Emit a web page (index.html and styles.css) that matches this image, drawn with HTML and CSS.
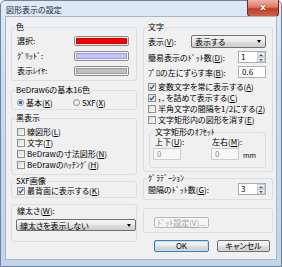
FILE: index.html
```html
<!DOCTYPE html>
<html lang="ja">
<head>
    <meta charset="UTF-8">
    <title>図形表示の設定</title>
    <link rel="stylesheet" href="styles.css">
</head>
<body>
<div class="window">
    <div class="titlebar">
        <span class="title">図形表示の設定</span>
        <span class="close-btn">x</span>
    </div>
    <div class="client">
        <!-- left column -->
        <div class="col">
            <fieldset class="group g-color">
                <legend>色</legend>
                <div class="color-row"><span>選択:</span><span class="swatch"><span class="fill red"></span></span></div>
                <div class="color-row"><span><span class="hw">ｸﾞﾘｯﾄﾞ</span>:</span><span class="swatch"><span class="fill lavender"></span></span></div>
                <div class="color-row"><span>表示<span class="hw">ﾚｲﾔ</span>:</span><span class="swatch"><span class="fill gray"></span></span></div>
            </fieldset>
            <fieldset class="group g-palette">
                <legend>BeDraw6の基本16色</legend>
                <div class="radio-row">
                    <label class="opt opt-wide"><span class="radio on"></span>基本(<u>K</u>)</label>
                    <label class="opt"><span class="radio"></span>SXF(<u>X</u>)</label>
                </div>
            </fieldset>
            <fieldset class="group g-black">
                <legend>黒表示</legend>
                <label class="opt"><span class="check"></span>線図形(<u>L</u>)</label>
                <label class="opt"><span class="check"></span>文字(<u>T</u>)</label>
                <label class="opt"><span class="check"></span>BeDrawの寸法図形(<u>N</u>)</label>
                <label class="opt"><span class="check"></span>BeDrawの<span class="hw">ﾊｯﾁﾝｸﾞ</span>(<u>H</u>)</label>
            </fieldset>
            <fieldset class="group g-sxf">
                <legend>SXF画像</legend>
                <label class="opt"><span class="check on"><svg viewBox="0 0 6 6"><path d="M0.8 3.2 L2.4 4.8 L5.3 0.9"/></svg></span>最背面に表示する(<u>K</u>)</label>
            </fieldset>
            <fieldset class="group g-width">
                <div class="plain-label">線太さ(<u>W</u>):</div>
                <div class="combo combo-wide"><span>線太さを表示しない</span><span class="arrow"></span></div>
            </fieldset>
        </div>

        <!-- right column -->
        <div class="col">
            <fieldset class="group g-text">
                <legend>文字</legend>
                <div class="field-row row-combo">
                    <span>表示(<u>V</u>):</span>
                    <div class="combo"><span>表示する</span><span class="arrow"></span></div>
                </div>
                <div class="field-row">
                    <span>簡易表示の<span class="hw">ﾄﾞｯﾄ</span>数(<u>D</u>):</span>
                    <div class="spin"><span class="val">1</span><span class="arrows"><i></i><i></i></span></div>
                </div>
                <div class="field-row">
                    <span><span class="hw">ﾌﾟﾛ</span>の左にずらす率(<u>B</u>):</span>
                    <div class="textbox">0.6</div>
                </div>
                <div class="checks">
                    <label class="opt"><span class="check on"><svg viewBox="0 0 6 6"><path d="M0.8 3.2 L2.4 4.8 L5.3 0.9"/></svg></span>変数文字を常に表示する(<u>A</u>)</label>
                    <label class="opt"><span class="check on"><svg viewBox="0 0 6 6"><path d="M0.8 3.2 L2.4 4.8 L5.3 0.9"/></svg></span>，．を詰めて表示する(<u>C</u>)</label>
                    <label class="opt"><span class="check"></span>半角文字の間隔を1/2にする(<u>2</u>)</label>
                    <label class="opt"><span class="check"></span>文字矩形内の図形を消す(<u>E</u>)</label>
                </div>
                <fieldset class="group g-offset">
                    <legend>文字矩形の<span class="hw">ｵﾌｾｯﾄ</span></legend>
                    <div class="offset-row">
                        <div class="offset-col">
                            <span class="offset-label">上下(<u>U</u>):</span>
                            <div class="textbox disabled">0</div>
                        </div>
                        <div class="offset-col narrow">
                            <span class="offset-label">左右(<u>M</u>):</span>
                            <div class="textbox disabled">0</div>
                        </div>
                        <span class="unit">mm</span>
                    </div>
                </fieldset>
            </fieldset>
            <fieldset class="group g-grad">
                <legend><span class="hw">ｸﾞﾗﾃﾞｰｼｮﾝ</span></legend>
                <div class="field-row">
                    <span>間隔の<span class="hw">ﾄﾞｯﾄ</span>数(<u>G</u>):</span>
                    <div class="spin"><span class="val">3</span><span class="arrows"><i></i><i></i></span></div>
                </div>
            </fieldset>
            <fieldset class="group g-dot">
                <button class="btn disabled"><span class="hw">ﾄﾞｯﾄ</span>設定(<u>V</u>)...</button>
            </fieldset>
            <div class="actions">
                <button class="btn default">OK</button>
                <button class="btn">キャンセル</button>
            </div>
        </div>
    </div>
</div>
</body>
</html>
```

FILE: styles.css
```css
/* dialog window */
* {
    box-sizing: border-box;
}

body {
    margin: 0;
    font-family: "Noto Sans CJK JP", sans-serif;
    font-size: 8px;
    font-feature-settings: "palt";
    color: #000;
}

/* half-width katakana keep their normal width */
.hw {
    font-feature-settings: normal;
}

u {
    text-decoration-thickness: 1px;
    text-underline-offset: 1px;
}

.window {
    width: 282px;
    height: 267px;
    display: flex;
    flex-direction: column;
    padding: 0 4px 6px;
    background: linear-gradient(#dfe9f5, #cbdcef 30%, #c1d4ea);
    border: 1px solid #6f839c;
    border-radius: 5px 5px 0 0;
}

.titlebar {
    height: 15px;
    display: flex;
    align-items: flex-start;
}

.title {
    padding: 4px 0 0 1px;
    line-height: 9px;
    color: #1a2330;
}

.close-btn {
    margin-left: auto;
    margin-right: -2px;
    margin-top: -1px;
    width: 32px;
    height: 17px;
    border: 1px solid #6d2b24;
    border-top: none;
    border-radius: 0 0 4px 4px;
    background: linear-gradient(#eeb2a6, #d97a6b 45%, #c23c27 55%, #d0614a);
    color: #fff;
    font: bold 9px "DejaVu Sans", sans-serif;
    line-height: 15px;
    text-align: center;
    text-shadow: 0 0 1px #4a1a14, 0 0 1px #4a1a14;
}

.client {
    flex: 1;
    display: grid;
    grid-template-columns: 126px 130px;
    column-gap: 6px;
    align-items: start;
    padding: 6px 0 0 5px;
    background: #f0f0f0;
    border: 1px solid #a5b7cc;
}

.col {
    display: flex;
    flex-direction: column;
}

/* group boxes */
.group {
    margin: 0;
    padding: 0 5px;
    border: 1px solid #d5dfe5;
    border-radius: 3px;
    min-width: 0;
}

.group legend {
    padding: 0 1px;
    margin-left: -2px;
    line-height: 8px;
}

.g-color {
    padding: 2px 5px 2px;
}

.color-row {
    height: 15px;
    display: flex;
    align-items: center;
    justify-content: space-between;
    padding-right: 2px;
}

.swatch {
    width: 55px;
    height: 10px;
    display: flex;
    padding: 1px;
    background: #f6f6f6;
    border: 1px solid #8b8b8b;
    border-radius: 2px;
}

.fill {
    flex: 1;
    border: 1px solid rgba(0, 0, 0, 0.18);
}

.fill.red { background: #ff0000; }
.fill.lavender { background: #c0c0ff; }
.fill.gray { background: #c0c0c0; }

.g-palette {
    margin-top: 5px;
    padding: 2px 5px 1px;
}

.radio-row {
    display: flex;
    height: 12px;
}

.opt {
    display: flex;
    align-items: center;
    height: 11px;
    white-space: nowrap;
}

.radio-row .opt {
    height: 12px;
}

.opt-wide {
    width: 56px;
}

.radio {
    width: 7px;
    height: 7px;
    margin-right: 2px;
    border: 1px solid #8e8f8f;
    border-radius: 50%;
    background: radial-gradient(#ffffff, #d8d8d8);
}

.radio.on {
    background: radial-gradient(circle, #1c4f86 0, #2f7fc0 1.4px, #e9eef2 2.1px);
}

.check {
    width: 8px;
    height: 8px;
    margin-right: 2px;
    display: inline-flex;
    align-items: center;
    justify-content: center;
    border: 1px solid #8e8f8f;
    background: linear-gradient(135deg, #d9d9d9, #fafafa);
    flex-shrink: 0;
}

.check svg {
    width: 6px;
    height: 6px;
    fill: none;
    stroke: #3c5a98;
    stroke-width: 1.4;
}

.g-black {
    margin-top: 4px;
    padding: 4px 5px 4px;
}

.g-sxf {
    margin-top: 2px;
    padding: 0 5px 1px;
}

.g-width {
    margin-top: 6px;
    padding: 1px 0 10px 4px;
}

.plain-label {
    line-height: 9px;
    margin-left: 1px;
}

/* combo / spin / textbox */
.combo {
    width: 75px;
    height: 13px;
    display: flex;
    align-items: center;
    justify-content: space-between;
    padding: 0 4px 0 3px;
    border: 1px solid #707070;
    border-radius: 2px;
    background: linear-gradient(#f4f4f4, #ebebeb 50%, #dddddd 50%, #cfcfcf);
}

.combo-wide {
    width: 120px;
    height: 12px;
    margin-top: 4px;
}

.arrow {
    border-left: 2.5px solid transparent;
    border-right: 2.5px solid transparent;
    border-top: 3px solid #000;
}

.field-row {
    display: flex;
    align-items: center;
    justify-content: space-between;
    margin-left: -1px;
    margin-right: 1px;
    height: 12px;
    margin-bottom: 3px;
}

.field-row.row-combo {
    height: 13px;
}

.spin {
    width: 28px;
    height: 12px;
    display: flex;
    background: #fff;
    border: 1px solid #abadb3;
}

.spin .val {
    flex: 1;
    padding-left: 2px;
    line-height: 10px;
}

.spin .arrows {
    width: 8px;
    display: flex;
    flex-direction: column;
}

.spin .arrows i {
    flex: 1;
    display: flex;
    align-items: center;
    justify-content: center;
    border: 1px solid #c6cdd6;
    background: linear-gradient(#f6f8fa, #e1e6ec);
}

.spin .arrows i::before {
    content: "";
    border-left: 2px solid transparent;
    border-right: 2px solid transparent;
    border-bottom: 2px solid #4d5866;
}

.spin .arrows i + i::before {
    border-bottom: none;
    border-top: 2px solid #4d5866;
}

.textbox {
    width: 28px;
    height: 12px;
    padding-left: 3px;
    line-height: 10px;
    background: #fff;
    border: 1px solid #abadb3;
}

.textbox.disabled {
    color: #8a8a8a;
    background: #f7f7f7;
    border-color: #c9ccd0;
}

/* text group */
.g-text {
    padding: 4px 5px 3px;
}

.checks {
    margin-top: 3px;
    margin-left: -1px;
}

.g-offset {
    margin-top: 3px;
    margin-right: 1px;
    padding: 1px 3px 7px;
}

.g-offset legend {
    margin-left: 1px;
}

.offset-row {
    display: flex;
    align-items: flex-end;
}

.offset-col {
    width: 58px;
    display: flex;
    flex-direction: column;
}

.offset-col.narrow {
    width: 32px;
}

.offset-label {
    line-height: 9px;
    margin-bottom: 2px;
    padding-left: 2px;
}

.offset-col.narrow .offset-label {
    padding-left: 1px;
}

.unit {
    font-size: 7px;
    line-height: 10px;
}

.g-grad {
    margin-top: 2px;
    padding: 1px 5px 4px;
}

.g-grad .field-row {
    margin-bottom: 0;
}

.g-dot {
    margin-top: 8px;
    padding: 8px 5px 4px;
}

/* buttons */
.btn {
    width: 55px;
    height: 12px;
    padding: 0;
    font: inherit;
    line-height: 10px;
    text-align: center;
    color: #000;
    border: 1px solid #707070;
    border-radius: 2px;
    background: linear-gradient(#f4f4f4, #ebebeb 50%, #dddddd 50%, #cfcfcf);
}

.g-dot .btn {
    margin-left: 5px;
    height: 11px;
}

.btn.disabled {
    color: #a3a3a3;
    border-color: #b5b9bd;
    background: #f4f4f4;
}

.btn.default {
    border-color: #3c7fb1;
    box-shadow: inset 0 0 0 1px #b9def5;
}

.actions {
    display: flex;
    gap: 8px;
    margin-top: 7px;
    padding-left: 11px;
}

.actions .btn + .btn {
    width: 53px;
}
```
